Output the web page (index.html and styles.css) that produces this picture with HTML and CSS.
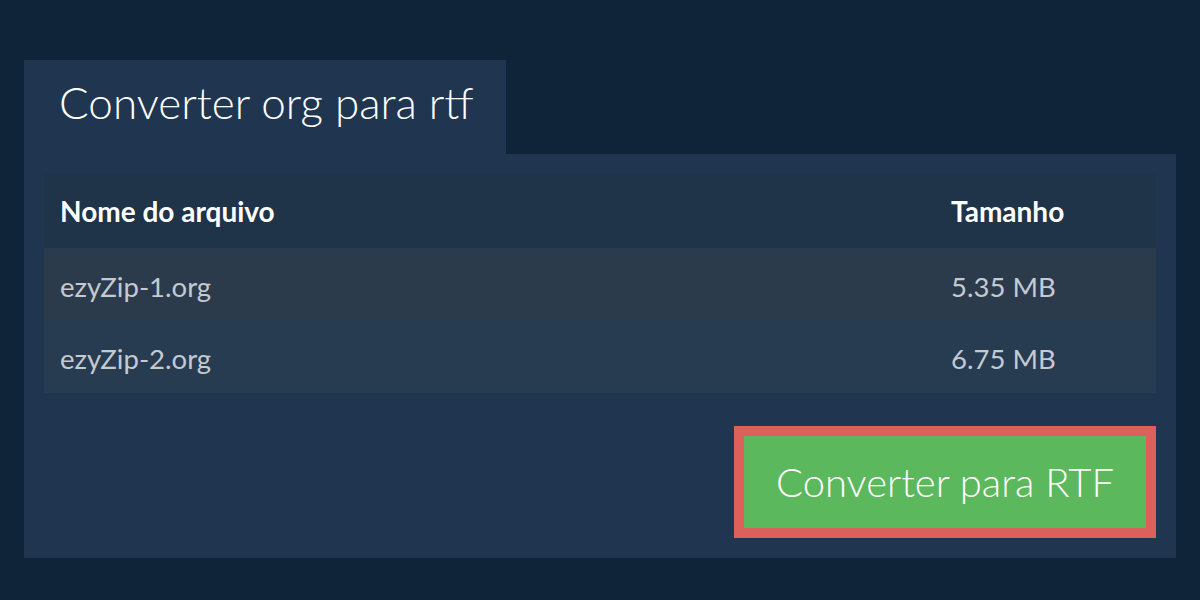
FILE: index.html
```html
<!DOCTYPE html>
<html lang="pt">
<head>
<meta charset="utf-8">
<title>Converter org para rtf</title>
<link rel="stylesheet" href="styles.css">
</head>
<body>
<main class="wrap">
  <div class="tab"><h1 class="title">Converter org para rtf</h1></div>
  <section class="panel">
    <div class="table">
      <div class="row head">
        <div class="cell">Nome do arquivo</div>
        <div class="cell">Tamanho</div>
      </div>
      <div class="row odd">
        <div class="cell">ezyZip-1.org</div>
        <div class="cell">5.35 MB</div>
      </div>
      <div class="row even">
        <div class="cell">ezyZip-2.org</div>
        <div class="cell">6.75 MB</div>
      </div>
    </div>
    <div class="actions">
      <button class="convert">Converter para RTF</button>
    </div>
  </section>
</main>
</body>
</html>
```

FILE: styles.css
```css
html, body {
  margin: 0;
  padding: 0;
  background: #0f2339;
  font-family: Lato, "Open Sans", sans-serif;
}
.wrap {
  padding: 60px 24px 0 24px;
  display: flex;
  flex-direction: column;
  align-items: flex-start;
}
.tab {
  width: 482px;
  height: 94px;
  background: #203650;
  box-sizing: border-box;
  padding-left: 35px;
  display: flex;
  align-items: center;
}
.title {
  margin: 0;
  font-weight: 300;
  font-size: 44px;
  color: #ffffff;
  line-height: 1;
  position: relative;
  top: -5px;
}
.panel {
  align-self: stretch;
  background: #203650;
  padding: 20px 20px 20px 20px;
  box-sizing: border-box;
  width: 1152px;
}
.table {
  display: flex;
  flex-direction: column;
}
.row {
  display: grid;
  grid-template-columns: 1fr 221px;
  align-items: center;
}
.cell {
  padding-left: 16px;
}
.head {
  height: 74px;
  background: #1f3349;
  color: #ffffff;
  font-weight: 700;
  font-size: 28px;
}
.odd, .even {
  height: 72.5px;
  color: #c4cad0;
  font-size: 27.5px;
}
.odd .cell, .even .cell { position: relative; top: 2px; }
.odd { background: #2b3b4c; }
.even { background: #273b51; }
.actions {
  display: flex;
  justify-content: flex-end;
  margin-top: 33px;
}
.convert {
  width: 422px;
  height: 112px;
  background: #5cb85c;
  border: 10px solid #dc605c;
  color: #ffffff;
  font-family: Lato, "Open Sans", sans-serif;
  font-weight: 300;
  font-size: 40px;
  padding: 0;
  box-sizing: border-box;
}
```
